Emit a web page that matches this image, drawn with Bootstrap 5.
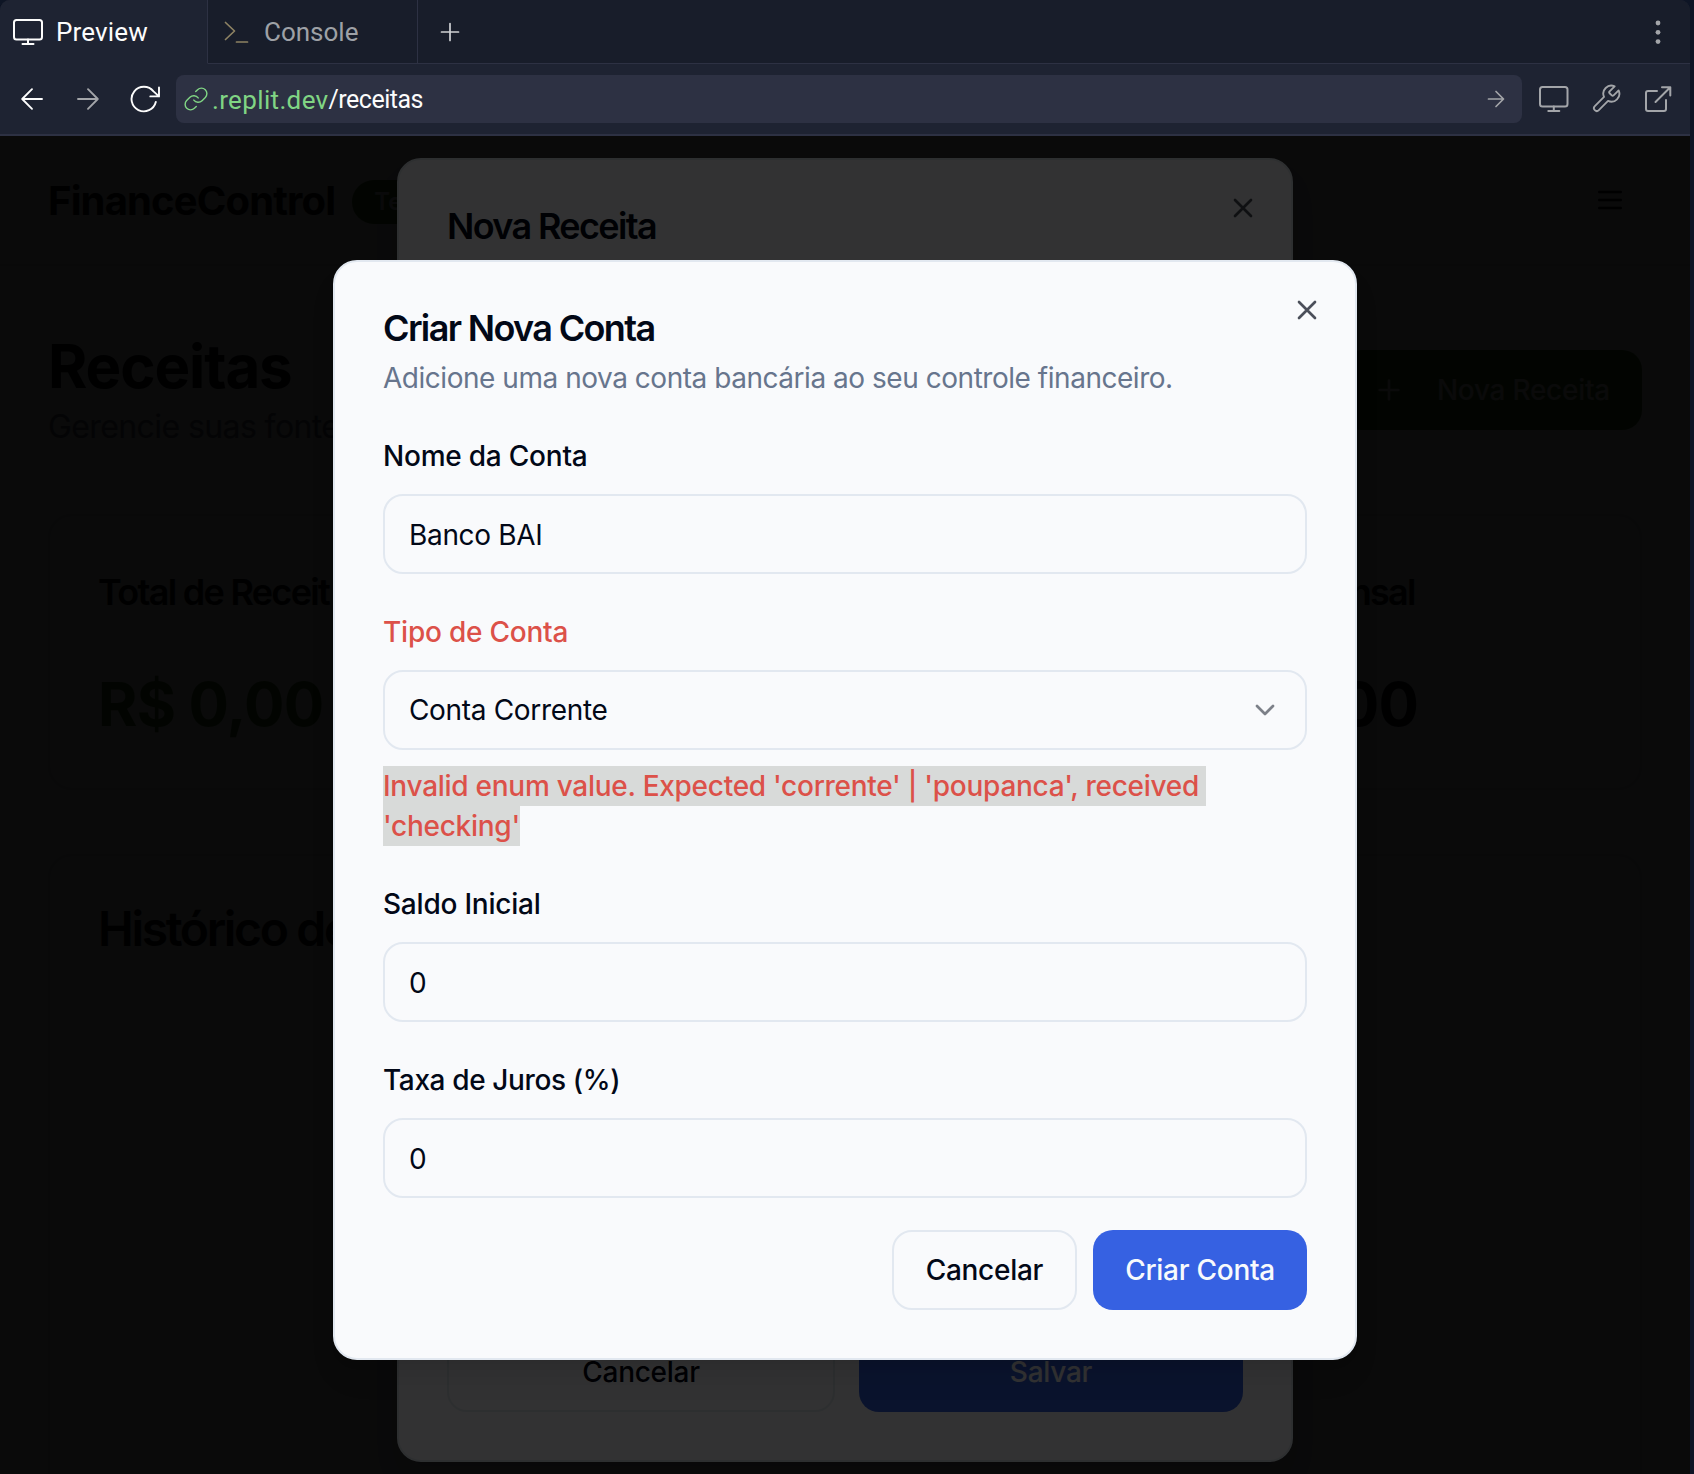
<!DOCTYPE html>
<html lang="pt">
<head>
<meta charset="utf-8">
<meta name="viewport" content="width=device-width, initial-scale=1">
<title>FinanceControl – Receitas</title>
<link href="https://cdn.jsdelivr.net/npm/bootstrap@5.3.0/dist/css/bootstrap.min.css" rel="stylesheet">
<style>
  body { background: #0e1525; font-family: Inter, "Liberation Sans", sans-serif; color: #020817; height: 1474px; overflow: hidden; }
  svg { display: block; flex: none; fill: none; stroke: currentColor; stroke-linecap: round; stroke-linejoin: round; }

  /* Preview pane chrome */
  .pane { width: 1690px; height: 1474px; border-radius: 10px 10px 0 0; background: #1e2332; font-family: Roboto, "Liberation Sans", sans-serif; }
  .tabstrip { height: 64px; font-size: 26px; background: #181d2a; }
  .tabstrip span { padding-top: 2px; }
  .tab-item { border-right: 1px solid #2d3143; border-bottom: 1px solid #2d3143; color: #9ea1a6; }
  .tab-on { width: 208px; padding-left: 12px; gap: 12px; background: #1e2332; color: #fcfcfc; border-bottom-color: #1e2332; letter-spacing: .15px; }
  .tab-off { width: 210px; padding-left: 14px; gap: 10px; }
  .tab-rest { border-bottom: 1px solid #2d3143; padding: 0 16px; color: #cfd1d4; }
  .toolrow { height: 72px; border-bottom: 2px solid #2d3143; padding: 0 16px; color: #a3a5a9; }
  .url { height: 48px; border-radius: 8px; background: #2d3143; font-size: 25px; margin-left: 16px; margin-right: 16px; padding: 0 10px 0 4px; }
  .url span { padding-top: 2px; }
  .host { color: #80d584; font-size: 26px; letter-spacing: .35px; }
  .path { color: #fcfcfc; letter-spacing: -.5px; }

  /* Application page */
  .app { height: 1338px; background: #f8fafc; font-family: Inter, "Liberation Sans", sans-serif; }
  .app-head { height: 130px; border-bottom: 2px solid #e2e8f0; padding: 0 64px 0 48px; }
  .brand { font-size: 40px; font-weight: 700; letter-spacing: -.85px; line-height: 56px; padding-top: 2px; }
  .pill { height: 44px; border-radius: 22px; padding: 0 22px; background: #3d7a1f; color: #f8fafc; font-size: 24px; font-weight: 600; margin: 4px 0 0 17px; }
  .app-main { padding: 64px 48px 0; }
  .h-page { font-size: 60px; line-height: 72px; font-weight: 700; letter-spacing: -1.1px; }
  .sub-page { font-size: 32px; line-height: 48px; color: #64748b; letter-spacing: -.6px; padding-top: 1px; margin-bottom: -1px; }
  .btn-green { background: #3d7a1f; color: #f8fafc; }
  .stats { display: grid; grid-template-columns: repeat(3, 1fr); gap: 48px; margin-top: 64px; }
  .panel { border: 2px solid #e2e8f0; border-radius: 24px; padding: 48px; background: #f8fafc; }
  .stat-name { font-size: 36px; line-height: 56px; font-weight: 600; letter-spacing: -1.7px; margin-bottom: 48px; }
  .stat-val { font-size: 60px; line-height: 72px; font-weight: 700; letter-spacing: -.77px; }
  .history { margin-top: 64px; height: 700px; font-size: 48px; line-height: 50px; font-weight: 600; letter-spacing: -2.350px; }

  /* Dialogs */
  .scrim { inset: 0; background: rgba(0,0,0,.8); }
  .dlg { border: 2px solid #e2e8f0; border-radius: 24px; background: #f9fafc; padding: 48px; box-shadow: 0 20px 30px -6px rgba(0,0,0,.1), 0 8px 12px -8px rgba(0,0,0,.1); }
  .dlg-back { left: 397px; top: 22px; width: 896px; height: 1304px; }
  .dlg-front { left: 333px; top: 124px; width: 1024px; height: 1100px; }
  .dlg-x { top: 32px; right: 32px; opacity: .7; }
  .dlg-title { font-size: 36px; line-height: 36px; font-weight: 600; letter-spacing: -1.650px; }
  .dlg-desc { font-size: 28px; line-height: 40px; color: #67758d; margin: 12px 0 32px; letter-spacing: -.467px; }
  .lbl { display: block; font-size: 28px; line-height: 28px; font-weight: 500; padding: 12px 0 8px; margin-bottom: 16px; letter-spacing: -.22px; }
  .lbl-tight { letter-spacing: -.37px; }
  .field { margin-bottom: 32px; }
  .ctl { height: 80px; border: 2px solid #e2e8f0; border-radius: 20px; padding: 2px 24px 0; font-size: 28px; background: #f9fafc; color: #020817; letter-spacing: -.33px; }
  .ctl-select { padding-top: 0; }
  .bad { color: #dc5149; }
  .err { font-size: 28px; line-height: 40px; font-weight: 500; margin-top: 16px; letter-spacing: -.27px; }
  .hl { display: inline-block; height: 40px; vertical-align: top; background: #d8dad9; white-space: pre; }
  .act { height: 80px; border-radius: 20px; padding: 0 32px; font-size: 28px; font-weight: 500; border: 0; display: flex; align-items: center; justify-content: center; letter-spacing: -.27px; }
  .act-line { border: 2px solid #e2e8f0; color: #020817; background: #f9fafc; }
  .act-blue { background: #3661e2; color: #f8fafc; }
</style>
</head>
<body>
<div class="pane d-flex flex-column overflow-hidden">
  <div class="tabstrip d-flex">
    <div class="tab-item tab-on d-flex align-items-center">
      <svg width="32" height="32" viewBox="0 0 32 32" stroke-width="2"><rect x="2" y="4" width="28" height="19.5" rx="2.5"/><path d="M16 23.5v4.5M10.500 28h11"/></svg>
      <span>Preview</span>
    </div>
    <div class="tab-item tab-off d-flex align-items-center">
      <svg width="32" height="32" viewBox="0 0 32 32" stroke-width="1.7" color="#8d8263"><path d="M3.500 6.500l9 8.500-9 8.500M14.500 26H25.500"/></svg>
      <span>Console</span>
    </div>
    <div class="tab-rest flex-grow-1 d-flex align-items-center justify-content-between">
      <svg width="32" height="32" viewBox="0 0 32 32" stroke-width="1.7"><path d="M16 7.500v17M7.500 16h17"/></svg>
      <svg width="32" height="32" viewBox="0 0 32 32" stroke="none" color="#a3a5a9"><g fill="currentColor" stroke="none"><circle cx="16" cy="7" r="2.400"/><circle cx="16" cy="16.300" r="2.400"/><circle cx="16" cy="25.600" r="2.400"/></g></svg>
    </div>
  </div>
  <div class="toolrow d-flex align-items-center">
    <svg class="me-4" width="32" height="32" viewBox="0 0 32 32" stroke-width="1.9" color="#fcfcfc"><path d="M26 16H6.500M16 6.200L6.200 16l9.800 9.800"/></svg>
    <svg class="me-4" width="32" height="32" viewBox="0 0 32 32" stroke-width="1.9"><path d="M6 16h19.500M16 6.200l9.800 9.800-9.800 9.800"/></svg>
    <svg width="32" height="32" viewBox="0 0 32 32" stroke-width="1.9" color="#fcfcfc"><path d="M27.800 19A12.300 12.300 0 1 1 25.500 8.400L31 13.400M31 4.500v8.900h-8.700"/></svg>
    <div class="url flex-grow-1 d-flex align-items-center">
      <svg width="32" height="32" viewBox="0 0 24 24" stroke-width="1.300" color="#80d584"><g transform="translate(12 12) scale(.82) translate(-12 -12)"><path d="M10 13a5 5 0 0 0 7.540.54l3-3a5 5 0 0 0-7.070-7.070l-1.720 1.710"/><path d="M14 11a5 5 0 0 0-7.540-.54l-3 3a5 5 0 0 0 7.070 7.070l1.710-1.710"/></g></svg>
      <span class="host">.replit.dev</span><span class="path">/receitas</span>
      <svg class="ms-auto" width="32" height="32" viewBox="0 0 32 32" stroke-width="1.700"><path d="M8.500 16h14.500M16 8.500l7.500 7.500-7.500 7.500"/></svg>
    </div>
    <svg width="32" height="32" viewBox="0 0 32 32" stroke-width="2"><rect x="2" y="4" width="27.500" height="19.500" rx="2.500"/><path d="M15.800 23.500v4.500M10.300 28h11"/></svg>
    <svg width="32" height="32" viewBox="0 0 24 24" stroke-width="1.400" style="margin:0 20px 0 20px"><path d="M14.700 6.300a1 1 0 0 0 0 1.400l1.600 1.600a1 1 0 0 0 1.400 0l3.770-3.770a6 6 0 0 1-7.940 7.940l-6.910 6.910a2.120 2.120 0 0 1-3-3l6.910-6.910a6 6 0 0 1 7.940-7.940l-3.760 3.760z"/></svg>
    <svg width="32" height="32" viewBox="0 0 32 32" stroke-width="2"><path d="M15 8H6a2 2 0 0 0-2 2v16a2 2 0 0 0 2 2h16a2 2 0 0 0 2-2v-9M20 4.200h8.300V12.500M28 4.500L13.500 19"/></svg>
  </div>

  <div class="app position-relative overflow-hidden">
    <header class="app-head d-flex align-items-center">
      <span class="brand">FinanceControl</span>
      <span class="pill d-flex align-items-center">Te</span>
      <svg class="ms-auto" width="32" height="32" viewBox="0 0 24 24" stroke-width="2"><path d="M4 6h16M4 12h16M4 18h16"/></svg>
    </header>
    <main class="app-main">
      <div class="d-flex justify-content-between align-items-center">
        <div>
          <div class="h-page">Receitas</div>
          <div class="sub-page">Gerencie suas fontes</div>
        </div>
        <div class="act btn-green">
          <svg width="32" height="32" viewBox="0 0 24 24" stroke-width="2" style="margin-right:32px"><path d="M5 12h14M12 5v14"/></svg>Nova Receita
        </div>
      </div>
      <div class="stats">
        <div class="panel"><div class="stat-name">Total de Receit</div><div class="stat-val" style="color:#3d7a1f">R$ 0,00</div></div>
        <div class="panel"></div>
        <div class="panel"><div class="stat-name">Média Mensal</div><div class="stat-val">R$ 0,00</div></div>
      </div>
      <div class="panel history">Histórico de</div>
    </main>

    <div class="scrim position-absolute"></div>
    <section class="dlg dlg-back position-absolute d-flex flex-column justify-content-between">
      <svg class="dlg-x position-absolute" width="32" height="32" viewBox="0 0 24 24" stroke-width="2"><path d="M18 6L6 18M6 6l12 12"/></svg>
      <div class="dlg-title">Nova Receita</div>
      <div class="d-flex gap-4">
        <div class="act act-line" style="flex:1 1 0">Cancelar</div>
        <div class="act act-blue" style="flex:1 1 0">Salvar</div>
      </div>
    </section>

    <div class="scrim position-absolute"></div>
    <section class="dlg dlg-front position-absolute">
      <svg class="dlg-x position-absolute" width="32" height="32" viewBox="0 0 24 24" stroke-width="2"><path d="M18 6L6 18M6 6l12 12"/></svg>
      <div class="dlg-title">Criar Nova Conta</div>
      <p class="dlg-desc">Adicione uma nova conta bancária ao seu controle financeiro.</p>
      <div class="field">
        <label class="lbl">Nome da Conta</label>
        <div class="ctl d-flex align-items-center">Banco BAI</div>
      </div>
      <div class="field">
        <label class="lbl bad">Tipo de Conta</label>
        <div class="ctl ctl-select d-flex align-items-center justify-content-between">Conta Corrente
          <svg class="opacity-50" width="32" height="32" viewBox="0 0 24 24" stroke-width="2"><path d="M6 9l6 6 6-6"/></svg>
        </div>
        <div class="err bad"><span class="hl">Invalid enum value. Expected 'corrente' | 'poupanca', received </span><br><span class="hl">'checking'</span></div>
      </div>
      <div class="field">
        <label class="lbl">Saldo Inicial</label>
        <div class="ctl d-flex align-items-center">0</div>
      </div>
      <div class="field">
        <label class="lbl lbl-tight">Taxa de Juros (%)</label>
        <div class="ctl d-flex align-items-center">0</div>
      </div>
      <div class="d-flex justify-content-end gap-3">
        <div class="act act-line">Cancelar</div>
        <div class="act act-blue">Criar Conta</div>
      </div>
    </section>
  </div>
</div>
<script src="https://cdn.jsdelivr.net/npm/bootstrap@5.3.0/dist/js/bootstrap.bundle.min.js"></script>
</body>
</html>
